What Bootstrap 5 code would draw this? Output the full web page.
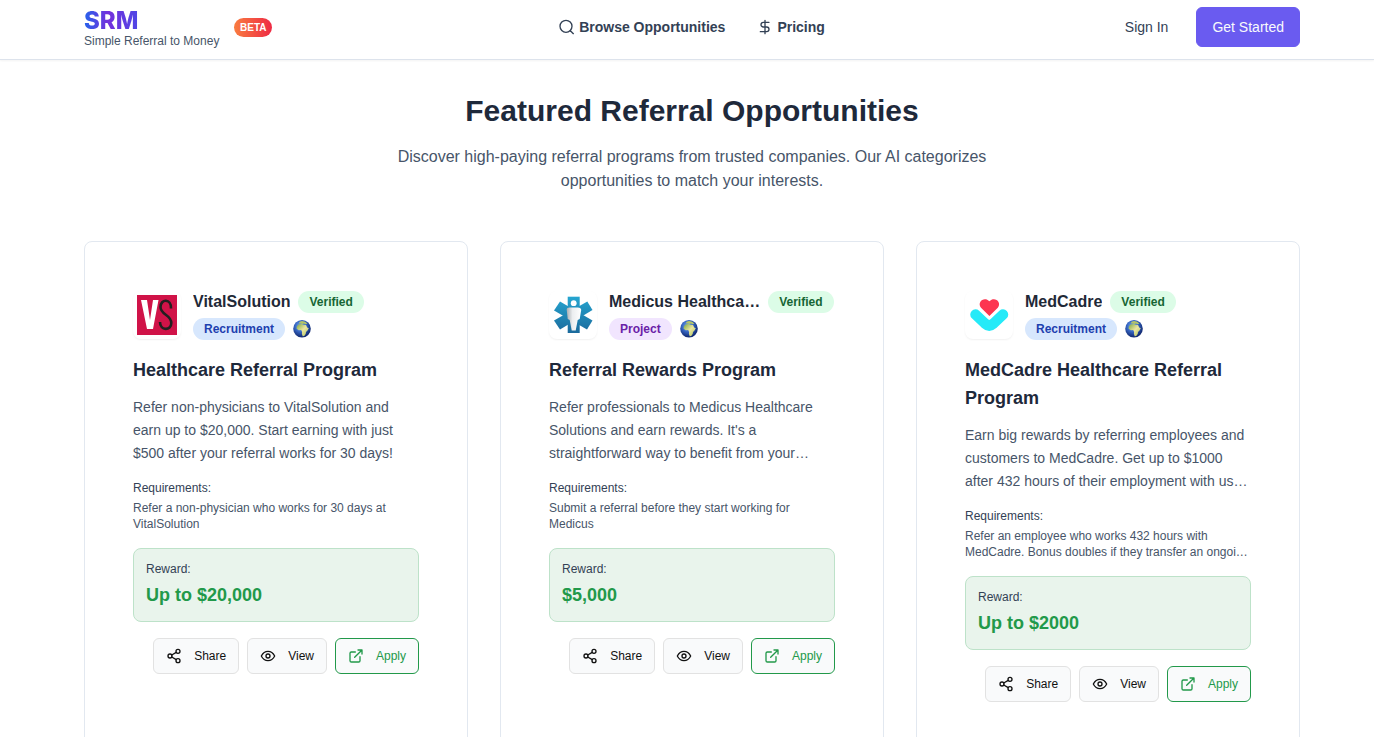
<!DOCTYPE html>
<html lang="en">
<head>
<meta charset="utf-8">
<meta name="viewport" content="width=device-width, initial-scale=1">
<title>SRM – Simple Referral to Money</title>
<link rel="stylesheet" href="https://cdn.jsdelivr.net/npm/bootstrap@5.3.0/dist/css/bootstrap.min.css">
<style>
  body { font-family: "Liberation Sans", Arial, sans-serif; color: #1e293b; background: #fff; }
  a { text-decoration: none; color: inherit; }
  svg { flex: none; display: block; }
  .line-icon { fill: none; stroke: currentColor; stroke-width: 2; stroke-linecap: round; stroke-linejoin: round; }
  .page-wrap { max-width: 1290px; margin: 0 auto; padding: 0 32px 0 42px; }
  .site-header { border-bottom: 1px solid #dde3ec; box-shadow: 0 1px 2px rgba(0,0,0,.05); padding-bottom: 5px; }
  .header-row { display: grid; grid-template-columns: 1fr auto 1fr; align-items: center; height: 54px; }
  .brand { min-width: 142px; padding-top: 4px; }
  .wordmark { font: 800 24px/24px Inter, sans-serif; background: linear-gradient(90deg, #2563eb, #7430dc 45%, #4f46e5); -webkit-background-clip: text; background-clip: text; color: transparent; align-self: flex-start; }
  .tagline { font-size: 12px; line-height: 16px; color: #475569; }
  .beta-pill { font-size: 10px; line-height: 15px; font-weight: 700; color: #fff; padding: 2px 6px; border-radius: 10px; background: linear-gradient(90deg, #f97c40, #ee2a44); }
  .main-links { font-size: 14px; line-height: 20px; font-weight: 700; color: #334155; gap: 32px; }
  .account-links { gap: 28px; }
  .signin { font-size: 14px; line-height: 20px; color: #334155; }
  .btn-start { --bs-btn-color: #f8fafc; --bs-btn-bg: #6a5bf0; --bs-btn-border-color: #6a5bf0; --bs-btn-hover-color: #fff; --bs-btn-hover-bg: #5b4be0; font-size: 14px; line-height: 20px; height: 40px; padding: 0 15px; border-radius: 6px; }
  .section-title { font-size: 30px; line-height: 36px; font-weight: 700; margin: 0 0 16px; }
  .section-lead { font-size: 16px; line-height: 24px; color: #475569; max-width: 640px; margin: 0 auto 48px; }
  .featured { padding-top: 33px; }
  .offers { display: grid; grid-template-columns: repeat(auto-fit, minmax(340px, 1fr)); gap: 32px; }
  .offer { border: 1px solid #e2e8f0; border-radius: 8px; padding: 48px; min-width: 0; }
  .offer-head { display: flex; align-items: center; gap: 12px; }
  .offer-logo { width: 48px; height: 48px; border-radius: 8px; box-shadow: 0 1px 2px rgba(0,0,0,.06); flex: none; padding: 4px; }
  .offer-name { font-size: 16px; line-height: 24px; font-weight: 700; margin: 0; color: #1f2937; }
  .pill { font-size: 12px; line-height: 16px; font-weight: 700; padding: 3px 11px; border-radius: 11px; }
  .pill-green { background: #dcfce7; color: #166534; }
  .pill-blue { background: #d7e7fd; color: #1e40af; }
  .pill-purple { background: #f1e5fe; color: #6b21a8; }
  .offer-title { font-size: 18px; line-height: 28px; font-weight: 700; margin: 16px 0 12px; }
  .offer-text { font-size: 14px; line-height: 23px; color: #475569; margin: 0 0 15px; }
  .small-label { font-size: 12px; line-height: 16px; color: #334155; margin: 0 0 4px; }
  .req-text { font-size: 12px; line-height: 16px; color: #475569; margin: 0 0 16px; }
  .reward { background: #e9f4ec; border: 1px solid #bde2c9; border-radius: 8px; padding: 12px; margin-bottom: 16px; }
  .reward-value { font-size: 18px; line-height: 28px; font-weight: 700; color: #22994a; margin: 0; }
  .btn-act { --bs-btn-color: #111; --bs-btn-bg: #f9fafb; --bs-btn-border-color: #e2e2e2; --bs-btn-hover-bg: #eef1f4; display: inline-flex; align-items: center; gap: 12px; height: 36px; padding: 0 12px; font-size: 12px; line-height: 16px; border-radius: 6px; }
  .btn-apply { --bs-btn-color: #22994a; --bs-btn-border-color: #22994a; }
</style>
</head>
<body>

<!-- shared icons -->
<svg width="0" height="0" class="position-absolute" aria-hidden="true">
  <defs>
    <radialGradient id="sea" cx=".42" cy=".35" r=".62"><stop offset="0" stop-color="#7fb2ee"/><stop offset=".5" stop-color="#3767c4"/><stop offset="1" stop-color="#122a72"/></radialGradient>
    <linearGradient id="land" x1="0" y1="0" x2="1" y2="1"><stop offset="0" stop-color="#7fa844"/><stop offset=".5" stop-color="#ece6a0"/><stop offset="1" stop-color="#a9c35c"/></linearGradient>
    <linearGradient id="star" gradientUnits="userSpaceOnUse" x1="0" y1="2" x2="0" y2="38"><stop offset="0" stop-color="#25a5d0"/><stop offset="1" stop-color="#1b6a9c"/></linearGradient>
    <linearGradient id="figure" x1="0" y1="0" x2="1" y2="0"><stop offset="0" stop-color="#a9aeb2"/><stop offset=".4" stop-color="#eceef0"/><stop offset="1" stop-color="#fff"/></linearGradient>
  </defs>
  <symbol id="i-share" viewBox="0 0 24 24"><circle cx="18" cy="5" r="3"/><circle cx="6" cy="12" r="3"/><circle cx="18" cy="19" r="3"/><path d="M8.6 13.5l6.8 4M15.4 6.5l-6.8 4"/></symbol>
  <symbol id="i-view" viewBox="0 0 24 24"><path d="M2 12s3.500-7 10-7 10 7 10 7-3.500 7-10 7-10-7-10-7z"/><circle cx="12" cy="12" r="3"/></symbol>
  <symbol id="i-apply" viewBox="0 0 24 24"><path d="M15 3h6v6M10 14L21 3M18 13v6a2 2 0 0 1-2 2H5a2 2 0 0 1-2-2V8a2 2 0 0 1 2-2h6"/></symbol>
  <symbol id="i-globe" viewBox="0 0 18 18"><circle cx="9" cy="8.800" r="8.800" fill="url(#sea)"/><path d="M3.800 6.500L5.500 4.600l3-.5 1.800.7 2.700.2 1.200 2.400 1.600.9-1.300 2.200-1.500 1.500-.3 2-1.500 2-1.500.2-.8-2.400.2-1.900-.9-1.800-2.400.1L3.600 8.800z" fill="url(#land)"/><path d="M5.800 3.300l.9-1.500 2.300-.9 3.200.8 2.200 2.100-1.800.4-1.700-.7-1.500.6-1.500-.7z" fill="#b5c565"/></symbol>
</svg>

<header class="site-header">
  <div class="page-wrap header-row">
    <div class="d-flex align-items-center gap-2">
      <a href="#" class="brand d-flex flex-column"><span class="wordmark">SRM</span><span class="tagline">Simple Referral to Money</span></a>
      <span class="beta-pill">BETA</span>
    </div>
    <nav class="main-links d-flex" aria-label="Main">
      <a href="#" class="d-flex align-items-center gap-1"><svg class="line-icon" width="16" height="16" viewBox="0 0 24 24"><circle cx="10.500" cy="11" r="9"/><path d="M21.500 22l-4.500-4.500"/></svg>Browse Opportunities</a>
      <a href="#" class="d-flex align-items-center gap-1"><svg class="line-icon" width="16" height="16" viewBox="0 0 24 24"><path d="M12 2v20M18 5H9.500a3.500 3.500 0 0 0 0 7h5a3.500 3.500 0 0 1 0 7H5"/></svg>Pricing</a>
    </nav>
    <div class="account-links d-flex align-items-center justify-content-end">
      <a href="#" class="signin">Sign In</a>
      <button type="button" class="btn btn-start">Get Started</button>
    </div>
  </div>
</header>

<main class="page-wrap featured">
  <div class="text-center">
    <h1 class="section-title">Featured Referral Opportunities</h1>
    <p class="section-lead">Discover high-paying referral programs from trusted companies. Our AI categorizes opportunities to match your interests.</p>
  </div>

  <div class="offers">
    <article class="offer">
      <div class="offer-head">
        <div class="offer-logo"><svg width="40" height="40" viewBox="0 0 40 40" role="img" aria-label="VitalSolution logo"><path fill="#d01348" d="M0 0h40v40H0z"/><path fill="#fff" d="M4 5h6l3 20 3-20h5.500l-5.500 29h-6z"/><path d="M34 13.500C34.500 3.500 23.500 3.500 23.500 12c0 8 10.800 7.500 10.800 16 0 8-11.300 8-11.300-1" fill="none" stroke="#231f20" stroke-width="2.600"/></svg></div>
        <div class="flex-grow-1 overflow-hidden">
          <div class="d-flex align-items-center gap-2 mb-1"><h2 class="offer-name text-truncate">VitalSolution</h2><span class="pill pill-green">Verified</span></div>
          <div class="d-flex align-items-center gap-2"><span class="pill pill-blue">Recruitment</span><svg width="18" height="18" role="img" aria-label="Worldwide"><use href="#i-globe"/></svg></div>
        </div>
      </div>
      <h3 class="offer-title">Healthcare Referral Program</h3>
      <p class="offer-text">Refer non-physicians to VitalSolution and earn up to $20,000. Start earning with just $500 after your referral works for 30 days!</p>
      <p class="small-label">Requirements:</p>
      <p class="req-text">Refer a non-physician who works for 30 days at VitalSolution</p>
      <div class="reward"><p class="small-label">Reward:</p><p class="reward-value">Up to $20,000</p></div>
      <div class="d-flex justify-content-end gap-2">
        <button type="button" class="btn btn-act"><svg class="line-icon" width="16" height="16"><use href="#i-share"/></svg>Share</button>
        <button type="button" class="btn btn-act"><svg class="line-icon" width="16" height="16"><use href="#i-view"/></svg>View</button>
        <button type="button" class="btn btn-act btn-apply"><svg class="line-icon" width="16" height="16"><use href="#i-apply"/></svg>Apply</button>
      </div>
    </article>

    <article class="offer">
      <div class="offer-head">
        <div class="offer-logo"><svg width="40" height="40" viewBox="0 0 40 40" role="img" aria-label="Medicus Healthcare logo"><g fill="url(#star)"><path d="M14.700 1.700h12v36.300h-12z"/><path d="M7 6.500L39.500 25.500l-5.500 9L1 15.500z"/><path d="M34.300 6.500l5.200 8.500L7 34.500l-6-9z"/></g><circle cx="20.700" cy="8.200" r="2.900" fill="#fff"/><path d="M13.700 14.500q0-2 3-2h8q3.500 0 3.500 2.500l-1.500 9-2 1-2 10.500h-4l-2-10.500-2-1z" fill="url(#figure)"/></svg></div>
        <div class="flex-grow-1 overflow-hidden">
          <div class="d-flex align-items-center gap-2 mb-1"><h2 class="offer-name text-truncate">Medicus Healthca…</h2><span class="pill pill-green">Verified</span></div>
          <div class="d-flex align-items-center gap-2"><span class="pill pill-purple">Project</span><svg width="18" height="18" role="img" aria-label="Worldwide"><use href="#i-globe"/></svg></div>
        </div>
      </div>
      <h3 class="offer-title">Referral Rewards Program</h3>
      <p class="offer-text">Refer professionals to Medicus Healthcare Solutions and earn rewards. It's a straightforward way to benefit from your…</p>
      <p class="small-label">Requirements:</p>
      <p class="req-text">Submit a referral before they start working for Medicus</p>
      <div class="reward"><p class="small-label">Reward:</p><p class="reward-value">$5,000</p></div>
      <div class="d-flex justify-content-end gap-2">
        <button type="button" class="btn btn-act"><svg class="line-icon" width="16" height="16"><use href="#i-share"/></svg>Share</button>
        <button type="button" class="btn btn-act"><svg class="line-icon" width="16" height="16"><use href="#i-view"/></svg>View</button>
        <button type="button" class="btn btn-act btn-apply"><svg class="line-icon" width="16" height="16"><use href="#i-apply"/></svg>Apply</button>
      </div>
    </article>

    <article class="offer">
      <div class="offer-head">
        <div class="offer-logo"><svg width="40" height="40" viewBox="0 0 40 40" role="img" aria-label="MedCadre logo"><path d="M6.500 19.500l9.500 9q4.200 3.800 8.500 0l9.500-9" fill="none" stroke="#25eaf8" stroke-width="10.500" stroke-linecap="round" stroke-linejoin="round"/><path d="M20.400 21.500L12 13C7.500 7 15.500 1 20.400 6.300 25.300 1 33.300 7 28.800 13z" fill="#fff" stroke="#fff" stroke-width="3.500"/><path d="M20.400 21L12 12.800C7.500 6.800 15.500 1 20.400 6.300 25.300 1 33.300 6.800 28.800 12.800z" fill="#fd3550"/></svg></div>
        <div class="flex-grow-1 overflow-hidden">
          <div class="d-flex align-items-center gap-2 mb-1"><h2 class="offer-name text-truncate">MedCadre</h2><span class="pill pill-green">Verified</span></div>
          <div class="d-flex align-items-center gap-2"><span class="pill pill-blue">Recruitment</span><svg width="18" height="18" role="img" aria-label="Worldwide"><use href="#i-globe"/></svg></div>
        </div>
      </div>
      <h3 class="offer-title">MedCadre Healthcare Referral Program</h3>
      <p class="offer-text">Earn big rewards by referring employees and customers to MedCadre. Get up to $1000 after 432 hours of their employment with us…</p>
      <p class="small-label">Requirements:</p>
      <p class="req-text">Refer an employee who works 432 hours with MedCadre. Bonus doubles if they transfer an ongoi…</p>
      <div class="reward"><p class="small-label">Reward:</p><p class="reward-value">Up to $2000</p></div>
      <div class="d-flex justify-content-end gap-2">
        <button type="button" class="btn btn-act"><svg class="line-icon" width="16" height="16"><use href="#i-share"/></svg>Share</button>
        <button type="button" class="btn btn-act"><svg class="line-icon" width="16" height="16"><use href="#i-view"/></svg>View</button>
        <button type="button" class="btn btn-act btn-apply"><svg class="line-icon" width="16" height="16"><use href="#i-apply"/></svg>Apply</button>
      </div>
    </article>
  </div>
</main>

<script src="https://cdn.jsdelivr.net/npm/bootstrap@5.3.0/dist/js/bootstrap.bundle.min.js"></script>
</body>
</html>
